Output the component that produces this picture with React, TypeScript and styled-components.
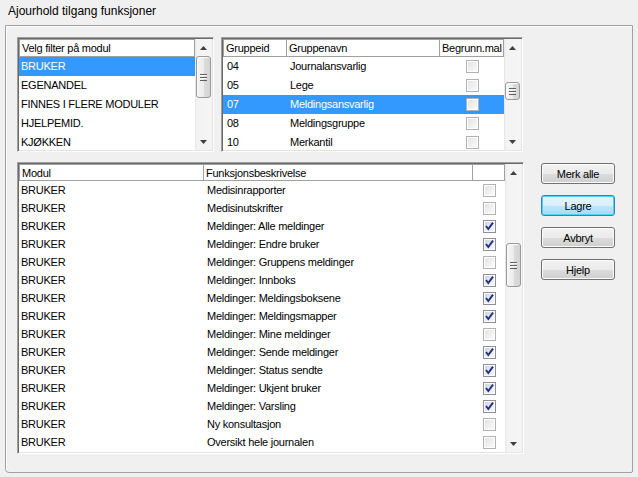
import React from "react";
import styled, { createGlobalStyle } from "styled-components";

const Global = createGlobalStyle`
  html, body { margin: 0; padding: 0; background: #f0f0f0; }
  * { box-sizing: border-box; }
`;

const Window = styled.div`
  width: 638px;
  height: 477px;
  background: #f0f0f0;
  display: flex;
  flex-direction: column;
  font-family: "Liberation Sans", Arial, sans-serif;
  font-size: 11px;
  letter-spacing: -0.25px;
  color: #000;
  overflow: hidden;
`;

const Title = styled.div`
  height: 25px;
  padding: 3px 0 0 8px;
  font-size: 12px;
  letter-spacing: 0;
  line-height: 16px;
`;

const Frame = styled.div`
  flex: 1;
  margin: 0 5px 4px 5px;
  border: 1px solid #a0a0a0;
  box-shadow: inset 1px 1px 0 #ffffff;
  border-radius: 0 0 2px 4px;
  padding: 11px 10px 0 11px;
  display: flex;
  flex-direction: column;
`;

const TopRow = styled.div`
  display: flex;
  gap: 7px;
  height: 115px;
`;

const BottomRow = styled.div`
  display: flex;
  margin-top: 10px;
  height: 292px;
`;

const Sunken = styled.div<{ $w: number }>`
  width: ${(p) => p.$w}px;
  height: 100%;
  border-top: 1px solid #a0a0a0;
  border-left: 1px solid #a0a0a0;
  border-right: 1px solid #ffffff;
  border-bottom: 1px solid #ffffff;
  box-shadow: inset 1px 1px 0 #696969, inset -1px -1px 0 #e3e3e3;
  padding: 1px;
  display: flex;
  background: #ffffff;
`;

const ListArea = styled.div`
  flex: 1;
  display: flex;
  flex-direction: column;
  overflow: hidden;
  background: #fff;
`;

const HeaderRow = styled.div<{ $cols: string; $h: number }>`
  display: grid;
  grid-template-columns: ${(p) => p.$cols};
  height: ${(p) => p.$h}px;
  flex: none;
`;

const HeaderCell = styled.div<{ $first?: boolean }>`
  border: 1px solid #a0a0a0;
  border-left-width: ${(p) => (p.$first ? 1 : 0)}px;
  background: #fff;
  padding-left: 2px;
  line-height: 16px;
  white-space: nowrap;
  overflow: hidden;
`;

const Row = styled.div<{ $cols: string; $h: number; $sel?: boolean }>`
  display: grid;
  grid-template-columns: ${(p) => p.$cols};
  height: ${(p) => p.$h}px;
  line-height: ${(p) => p.$h}px;
  flex: none;
  background: ${(p) => (p.$sel ? "#3399ff" : "#fff")};
  color: ${(p) => (p.$sel ? "#fff" : "#000")};
`;

const Cell = styled.div<{ $pad?: number; $center?: boolean }>`
  padding-left: ${(p) => p.$pad ?? 2}px;
  white-space: nowrap;
  overflow: hidden;
  display: flex;
  align-items: center;
  justify-content: ${(p) => (p.$center ? "center" : "flex-start")};
`;

const ScrollTrack = styled.div`
  width: 17px;
  height: 100%;
  flex: none;
  background: linear-gradient(to right, #e6e6e6 0px, #f3f3f3 2px, #f5f5f5 100%);
  position: relative;
  display: flex;
  flex-direction: column;
  justify-content: space-between;
`;

const Arrow = styled.div`
  height: 17px;
  display: flex;
  align-items: center;
  justify-content: center;
`;

const Thumb = styled.div`
  position: absolute;
  left: 1px;
  width: 15px;
  border: 1px solid #9a9a9a;
  border-radius: 3px;
  background: linear-gradient(to right, #f5f5f5 0%, #ececec 50%, #dcdcdc 51%, #d4d4d4 100%);
  box-shadow: inset 1px 1px 0 #fbfbfb;
  display: flex;
  align-items: center;
  justify-content: center;
`;

const Grip = () => (
  <svg width="7" height="7" viewBox="0 0 7 7">
    <g stroke="#5f5f5f" strokeWidth="1">
      <line x1="0" y1="0.5" x2="7" y2="0.5" />
      <line x1="0" y1="3.5" x2="7" y2="3.5" />
      <line x1="0" y1="6.5" x2="7" y2="6.5" />
    </g>
    <g stroke="#ffffff" strokeWidth="1" opacity="0.8">
      <line x1="0" y1="1.5" x2="7" y2="1.5" />
      <line x1="0" y1="4.5" x2="7" y2="4.5" />
    </g>
  </svg>
);

const Tri = ({ up }: { up?: boolean }) => (
  <svg width="7" height="4" viewBox="0 0 7 4">
    <polygon points={up ? "0,4 7,4 3.5,0" : "0,0 7,0 3.5,4"} fill="#404040" />
  </svg>
);

const Scrollbar = ({ top, height }: { top: number; height: number }) => (
  <ScrollTrack>
    <Arrow>
      <Tri up />
    </Arrow>
    <Arrow>
      <Tri />
    </Arrow>
    <Thumb style={{ top, height }}>
      <Grip />
    </Thumb>
  </ScrollTrack>
);

const Check = ({ checked }: { checked: boolean }) => (
  <svg width="13" height="13" viewBox="0 0 13 13">
    <defs>
      <linearGradient id={checked ? "cbOn" : "cbOff"} x1="0" y1="0" x2="1" y2="1">
        <stop offset="0" stopColor={checked ? "#cfd6e4" : "#e4e4e4"} />
        <stop offset="1" stopColor={checked ? "#f7f8fb" : "#fafafa"} />
      </linearGradient>
    </defs>
    <rect x="0.5" y="0.5" width="12" height="12" fill="#fff" stroke={checked ? "#8e8f9a" : "#b1b1b1"} />
    <rect x="2" y="2" width="9" height="9" fill={`url(#${checked ? "cbOn" : "cbOff"})`} />
    {checked && (
      <path d="M3 6 L5.3 9 L10 2.6" fill="none" stroke="#222f7a" strokeWidth="1.9" />
    )}
  </svg>
);

const ButtonCol = styled.div`
  display: flex;
  flex-direction: column;
  gap: 11px;
  margin: 1px 0 0 17px;
`;

const Button = styled.div<{ $default?: boolean }>`
  width: 74px;
  height: 21px;
  border: 1px solid ${(p) => (p.$default ? "#3c7fb1" : "#707070")};
  border-radius: 3px;
  background: ${(p) =>
    p.$default
      ? "linear-gradient(#e5f4fc 0%, #d9f0fc 50%, #bee6fd 51%, #a7d9f5 100%)"
      : "linear-gradient(#f2f2f2 0%, #ebebeb 50%, #dddddd 51%, #cfcfcf 100%)"};
  box-shadow: inset 0 0 0 1px ${(p) => (p.$default ? "#48d5fb" : "#fcfcfc")};
  display: flex;
  align-items: center;
  justify-content: center;
  font-size: 11px;
  padding-top: 1px;
`;

const filters = ["BRUKER", "EGENANDEL", "FINNES I FLERE MODULER", "HJELPEMID.", "KJØKKEN"];

const groups = [
  ["04", "Journalansvarlig"],
  ["05", "Lege"],
  ["07", "Meldingsansvarlig"],
  ["08", "Meldingsgruppe"],
  ["10", "Merkantil"],
];

const funcs: [string, boolean][] = [
  ["Medisinrapporter", false],
  ["Medisinutskrifter", false],
  ["Meldinger: Alle meldinger", true],
  ["Meldinger: Endre bruker", true],
  ["Meldinger: Gruppens meldinger", false],
  ["Meldinger: Innboks", true],
  ["Meldinger: Meldingsboksene", true],
  ["Meldinger: Meldingsmapper", true],
  ["Meldinger: Mine meldinger", false],
  ["Meldinger: Sende meldinger", true],
  ["Meldinger: Status sendte", true],
  ["Meldinger: Ukjent bruker", true],
  ["Meldinger: Varsling", true],
  ["Ny konsultasjon", false],
  ["Oversikt hele journalen", false],
];

const LEFT_COLS = "1fr";
const TOP_COLS = "64px 153px 64px";
const BOT_COLS = "185px 269px 32px";

export default function App() {
  return (
    <Window>
      <Global />
      <Title>Ajourhold tilgang funksjoner</Title>
      <Frame>
        <TopRow>
          <Sunken $w={197}>
            <ListArea>
              <HeaderRow $cols={LEFT_COLS} $h={18}>
                <HeaderCell $first>Velg filter på modul</HeaderCell>
              </HeaderRow>
              {filters.map((f, i) => (
                <Row key={f} $cols={LEFT_COLS} $h={19} $sel={i === 0}>
                  <Cell>{f}</Cell>
                </Row>
              ))}
            </ListArea>
            <Scrollbar top={17} height={42} />
          </Sunken>
          <Sunken $w={302}>
            <ListArea>
              <HeaderRow $cols={TOP_COLS} $h={18}>
                <HeaderCell $first>Gruppeid</HeaderCell>
                <HeaderCell>Gruppenavn</HeaderCell>
                <HeaderCell>Begrunn.mal</HeaderCell>
              </HeaderRow>
              {groups.map(([id, name], i) => (
                <Row key={id} $cols={TOP_COLS} $h={19} $sel={i === 2}>
                  <Cell $pad={4}>{id}</Cell>
                  <Cell $pad={3}>{name}</Cell>
                  <Cell $pad={0} $center>
                    <Check checked={false} />
                  </Cell>
                </Row>
              ))}
            </ListArea>
            <Scrollbar top={43} height={18} />
          </Sunken>
        </TopRow>
        <BottomRow>
          <Sunken $w={507}>
            <ListArea>
              <HeaderRow $cols={BOT_COLS} $h={17}>
                <HeaderCell $first>Modul</HeaderCell>
                <HeaderCell>Funksjonsbeskrivelse</HeaderCell>
                <HeaderCell />
              </HeaderRow>
              {funcs.map(([name, on]) => (
                <Row key={name} $cols={BOT_COLS} $h={18}>
                  <Cell>BRUKER</Cell>
                  <Cell $pad={3}>{name}</Cell>
                  <Cell $pad={0} $center>
                    <Check checked={on} />
                  </Cell>
                </Row>
              ))}
            </ListArea>
            <Scrollbar top={79} height={44} />
          </Sunken>
          <ButtonCol>
            <Button>Merk alle</Button>
            <Button $default>Lagre</Button>
            <Button>Avbryt</Button>
            <Button>Hjelp</Button>
          </ButtonCol>
        </BottomRow>
      </Frame>
    </Window>
  );
}
